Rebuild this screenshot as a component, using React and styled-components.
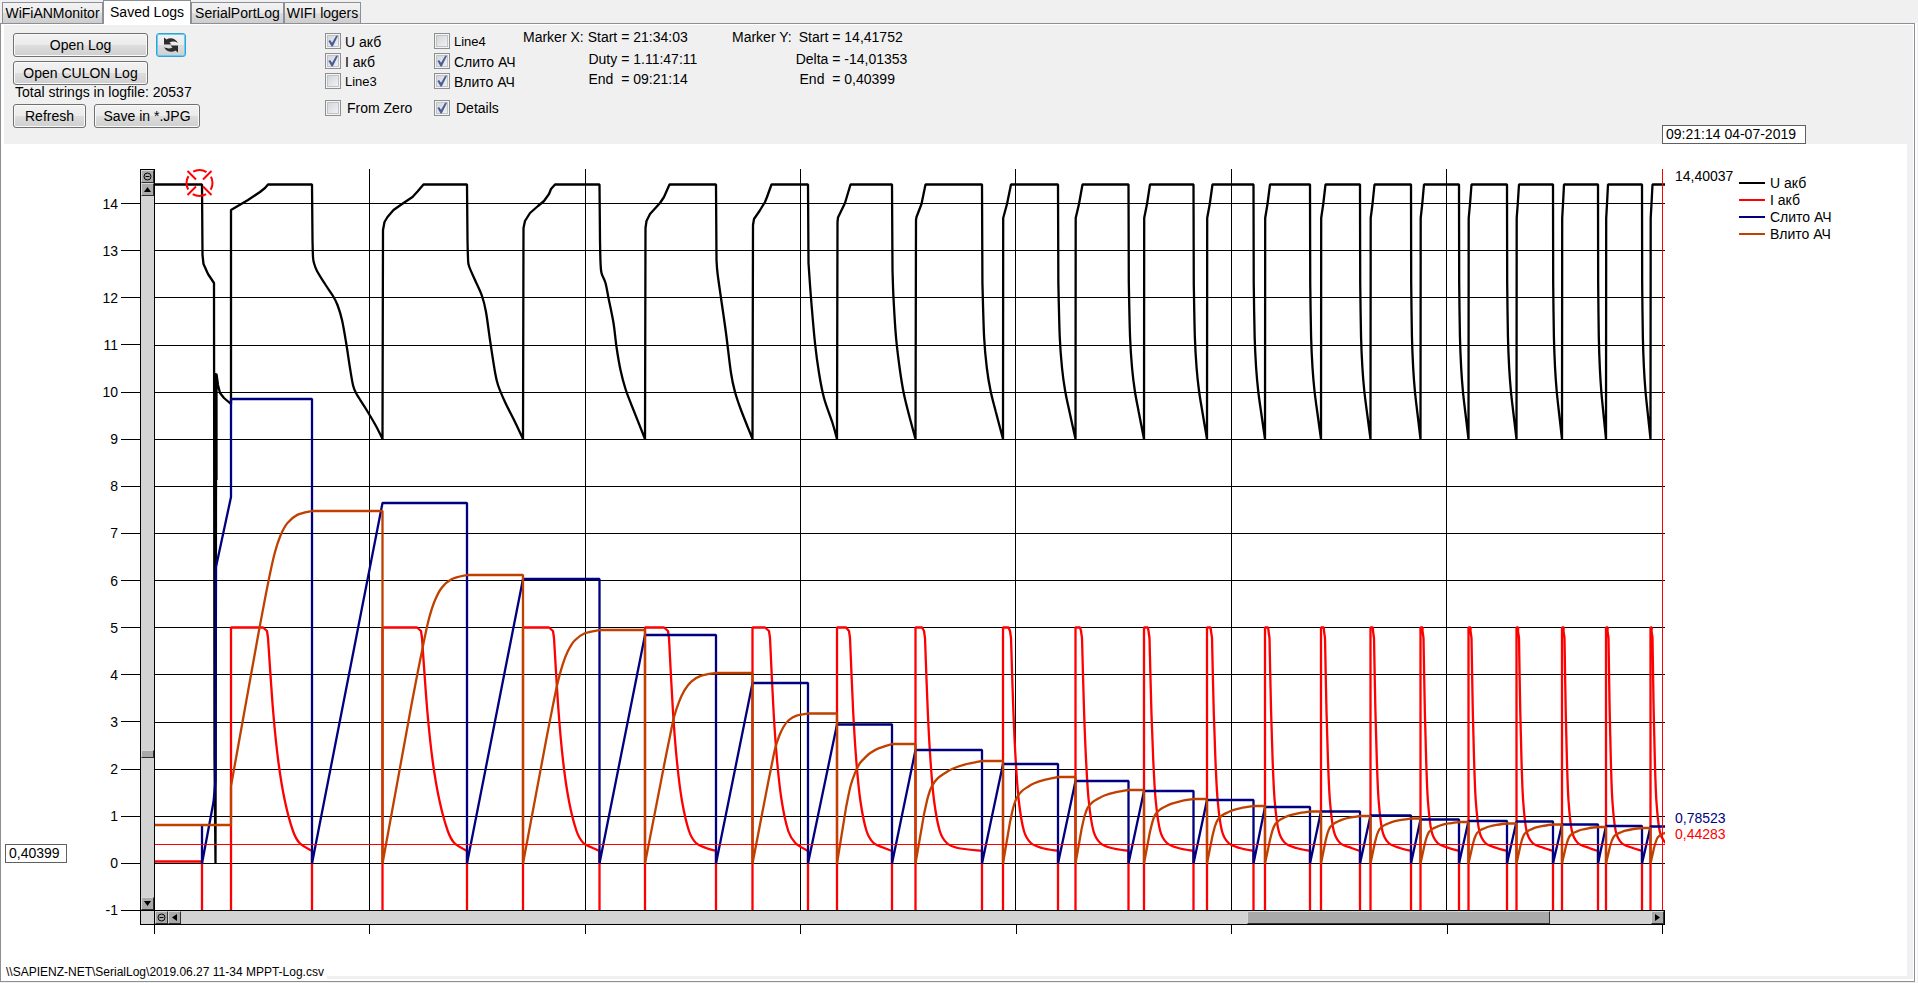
import React, { useState } from "react";
import styled, { createGlobalStyle } from "styled-components";

const GlobalStyle = createGlobalStyle`
  * {
    box-sizing: border-box;
  }
  body {
    margin: 0;
    background: #f0f0f0;
    color: #000;
    font: 14px/20px "Liberation Sans", Arial, sans-serif;
  }
  button, input {
    font: inherit;
    color: inherit;
  }
`;

const Window = styled.div`
  display: flex;
  flex-direction: column;
  min-height: 100vh;
  padding-right: 3px;
  padding-bottom: 1px;
`;

const Tabs = styled.nav`
  display: flex;
  align-items: flex-end;
  height: 23px;
  padding-left: 2px;
`;

const Tab = styled.button`
  width: ${(p) => p.$width}px;
  height: ${(p) => (p.$active ? 24 : 21)}px;
  margin-bottom: ${(p) => (p.$active ? -1 : 0)}px;
  padding: 0;
  border: 1px solid #8c8e98;
  border-bottom: 0;
  background: ${(p) =>
    p.$active ? "#fff" : "linear-gradient(#f3f3f3 0%, #ebebeb 50%, #dddddd 50%, #cdcdcd 100%)"};
  line-height: 19px;
  white-space: nowrap;
  z-index: ${(p) => (p.$active ? 1 : 0)};
`;

const Page = styled.main`
  flex: 1;
  display: flex;
  flex-direction: column;
  padding: 1px 1px 2px 3px;
  border: 1px solid #8c8e98;
  background: #fff;
  box-shadow: 2px 0 0 #fff;
`;

const Body = styled.div`
  flex: 1;
  display: flex;
  flex-direction: column;
  background: #f0f0f0;
`;

const Panel = styled.header`
  display: flex;
  height: 119px;
  padding: 8px 9px;
`;

const Actions = styled.div`
  display: flex;
  flex-direction: column;
  width: 312px;
`;

const ButtonRow = styled.div`
  display: flex;
  gap: 8px;
  margin-bottom: ${(p) => p.$after || 0}px;
`;

const Button = styled.button`
  width: ${(p) => p.$width}px;
  height: 24px;
  padding: 0;
  border: 1px solid ${(p) => (p.$focused ? "#3c9fd0" : "#707070")};
  border-radius: 3px;
  box-shadow: inset 0 0 0 1px ${(p) => (p.$focused ? "#5fd0f5" : "#fafafa")};
  background: linear-gradient(#f2f2f2 0%, #ebebeb 50%, #dddddd 50%, #cfcfcf 100%);
  line-height: 20px;
  white-space: nowrap;

  svg {
    display: block;
    margin: 0 auto;
  }
`;

const Total = styled.p`
  margin: -3px 0 2px 2px;
`;

const Checks = styled.div`
  display: grid;
  grid-template-columns: 109px 89px;
  grid-template-rows: 20px 20px 27px 20px;
  align-content: start;
`;

const Check = styled.label`
  display: flex;
  align-items: flex-start;
  gap: ${(p) => (p.$wide ? 6 : 4)}px;
  height: 16px;
  font-size: ${(p) => p.$size}px;
  line-height: ${(p) => (p.$wide ? 16 : 18)}px;
  white-space: nowrap;
`;

const Box = styled.input`
  appearance: none;
  width: 16px;
  height: 16px;
  margin: 0;
  padding: 1px;
  border: 1px solid #8e8f8f;
  box-shadow: inset 0 0 0 1px #f4f4f4, inset 0 0 0 2px #c0c4c9;
  background: linear-gradient(135deg, #cdd1d6, #f6f6f6);

  &:checked::after {
    content: "";
    display: block;
    width: 12px;
    height: 12px;
    background: #4a5f97;
    clip-path: polygon(12% 50%, 26% 42%, 42% 64%, 76% 6%, 92% 6%, 48% 96%, 38% 96%);
  }
`;

const Marker = styled.dl`
  display: grid;
  grid-template-columns: auto auto auto;
  grid-template-rows: 22px 20px 20px;
  align-content: start;
  width: ${(p) => p.$width}px;
  margin: -6px 0 0;
  justify-content: start;
  white-space: pre;
`;

const MarkerTitle = styled.dt`
  grid-row: 1 / 4;
  margin-right: 4px;
`;

const MarkerName = styled.dt`
  grid-column: 2;
  text-align: right;
`;

const MarkerValue = styled.dd`
  grid-column: 3;
  margin: 0;
`;

const Chart = styled.section`
  flex: 1;
  display: flex;
  flex-direction: column;
  margin-left: -3px;
  margin-right: 6px;
  padding-top: 25px;
  background: #fff;
`;

const PlotRow = styled.div`
  flex: 1;
  display: flex;
`;

const Gutter = styled.div`
  position: relative;
  width: 89px;
`;

const YAxis = styled.ol`
  display: flex;
  flex-direction: column;
  justify-content: space-between;
  width: 50px;
  margin: 0 0 -1px;
  padding: 34px 0 0;
  list-style: none;
`;

const YTick = styled.li`
  display: flex;
  align-items: center;
  justify-content: flex-end;
  gap: 3px;
  height: 1px;

  &::after {
    content: "";
    width: 19px;
    height: 1px;
    background: #000;
  }
`;

const VScroll = styled.div`
  display: flex;
  flex-direction: column;
  width: 15px;
  border: 1px solid #000;
  border-bottom: 0;
  background: #d3d3d3;
`;

const HScroll = styled.div`
  flex: 1;
  display: flex;
  height: 15px;
  border: 1px solid #000;
  border-left: 0;
  background: #d3d3d3;
`;

const ScrollButton = styled.button`
  display: grid;
  place-items: center;
  width: 13px;
  height: 13px;
  padding: 0;
  border: 1px solid;
  border-color: #d8d8d8 #303030 #303030 #d8d8d8;
  background: #a9a9a9;
`;

const Thumb = styled.div`
  flex: ${(p) => p.$size};
  border: 1px solid;
  border-color: #d8d8d8 #303030 #303030 #d8d8d8;
  background: #a9a9a9;
`;

const Track = styled.div`
  flex: ${(p) => p.$size};
`;

const Plot = styled.div`
  position: relative;
  flex: 1;
  min-width: 0;
`;

const PlotSvg = styled.svg`
  position: absolute;
  inset: 0;
  width: 100%;
  height: 100%;
`;

const Side = styled.aside`
  width: 242px;
  padding: 5px 0 0 74px;
`;

const LegendRow = styled.div`
  display: flex;
  align-items: center;
  gap: 5px;
  height: 17px;

  &::before {
    content: "";
    width: 26px;
    height: 2px;
    background: ${(p) => p.$color};
  }
`;

const CursorLabel = styled.output`
  position: absolute;
  padding: 0 3px;
  border: 1px solid #606060;
  background: #fff;
  line-height: 17px;
  white-space: nowrap;
`;

const DateLabel = styled(CursorLabel)`
  top: -44px;
  left: calc(100% - 3px);
  width: 144px;
`;

const LevelLabel = styled(CursorLabel)`
  left: 4px;
  bottom: 47px;
  width: 62px;
`;

const ValueLabel = styled.output`
  position: absolute;
  top: ${(p) => p.$top}%;
  left: calc(100% + 10px);
  color: ${(p) => p.$color};
  line-height: 14px;
`;

const ScrollRow = styled.div`
  display: flex;
  padding: 0 242px 0 139px;
`;

const Corner = styled.div`
  width: 15px;
  height: 15px;
  border: 1px solid #000;
  background: #d3d3d3;
`;

const XTicks = styled.div`
  display: flex;
  justify-content: space-between;
  height: 9px;
  margin: 0 244px 0 153px;

  i {
    width: 1px;
    background: #000;
  }
`;

const Footer = styled.footer`
  display: flex;
  align-items: flex-end;
  height: 45px;
  margin: 0 6px 0 -3px;
  padding-left: 5px;
  background: #fff;
  font-size: 12px;
  line-height: 14px;

  &::after {
    content: "";
    flex: 1;
    height: 3px;
    margin-left: 3px;
    margin-right: -6px;
    background: #f0f0f0;
  }
`;

const BLUE = "#000080";
const BROWN = "#c04000";

// plot area in drawing units: zero line at 863, one volt/amp = 47.13
const LEFT = 155;
const TOP = 169;
const WIDTH = 1510;
const HEIGHT = 741;
const ZERO = 863.5;
const FULL = 184.5;

// start, end of flat current, end of charge, discharged level, charged level,
// speed of the current decay, knee of the charge curve
const cycles = [
  { a: 231, k: 268, b: 312, out: 399, in: 511, s: 1.3, knee: 0.48 },
  { a: 382.5, k: 422, b: 467, out: 503, in: 575, s: 1.35, knee: 0.49 },
  { a: 523, k: 554, b: 599.5, out: 579, in: 630, s: 1.15, knee: 0.45 },
  { a: 645, k: 669, b: 716, out: 635, in: 673, s: 1, knee: 0.41 },
  { a: 752.5, k: 770, b: 808, out: 683, in: 713.5, s: 0.9, knee: 0.41 },
  { a: 837, k: 850, b: 892, out: 724.5, in: 744, s: 0.8, knee: 0.33 },
  { a: 915.5, k: 925, b: 982, out: 750, in: 761, s: 0.7, knee: 0.25 },
  { a: 1003, k: 1011, b: 1058, out: 764, in: 777, s: 0.6, knee: 0.25 },
  { a: 1075.5, k: 1082, b: 1128.5, out: 781, in: 790, s: 0.52, knee: 0.23 },
  { a: 1144, k: 1149.5, b: 1193.5, out: 791, in: 799, s: 0.48, knee: 0.23 },
  { a: 1207, k: 1212, b: 1253.5, out: 800, in: 806, s: 0.44, knee: 0.23 },
  { a: 1265, k: 1269.5, b: 1310, out: 807, in: 811.5, s: 0.4, knee: 0.23 },
  { a: 1321, k: 1325, b: 1360, out: 811.5, in: 816, s: 0.38, knee: 0.23 },
  { a: 1370.5, k: 1374, b: 1411, out: 815.5, in: 818.5, s: 0.36, knee: 0.22 },
  { a: 1420.5, k: 1423.5, b: 1459, out: 819.5, in: 822, s: 0.34, knee: 0.22 },
  { a: 1468.5, k: 1471.5, b: 1507, out: 821, in: 823.5, s: 0.33, knee: 0.22 },
  { a: 1516.5, k: 1519, b: 1553, out: 821.5, in: 824.5, s: 0.32, knee: 0.22 },
  { a: 1562, k: 1564.5, b: 1598, out: 824.5, in: 827, s: 0.31, knee: 0.22 },
  { a: 1606, k: 1608.5, b: 1642, out: 826, in: 828, s: 0.3, knee: 0.22 },
  { a: 1650.5, k: 1652.5, b: 1684, out: 826.5, in: 829, s: 0.3, knee: 0.22 },
];

// voltage while charging / discharging, x measured from the start of the part
const chargeShapes = [
  [[0, 210], [17, 200], [29, 192], [34, 188], [37, FULL]],
  [[0.5, 230], [2, 222], [5, 217], [11, 210], [21, 203], [30, 197], [35, 191.5], [41, FULL]],
  [[0.5, 228], [2, 221], [7, 213], [15, 206], [21, 201], [26, 194], [28, 189], [32, FULL]],
  [[0.5, 228], [1.5, 221], [5, 214], [15, 203], [19, 197], [24.5, FULL]],
  [[0.5, 225], [1.5, 219], [7, 211], [12.5, 202], [14.5, 197], [19, FULL]],
  [[0.5, 222], [1, 217.5], [8, 203], [13.5, FULL]],
  [[0.5, 220], [1, 217], [6, 204], [10, FULL]],
];

const dischargeShapes = [
  [[0.5, 240], [1, 257], [2, 263], [5, 271], [13, 284], [21, 296], [25.5, 305], [30, 320], [34, 342], [38, 368], [41, 385], [44, 393], [54, 409], [64, 426]],
  [[0.5, 240], [1, 258], [2, 266], [8, 280], [15, 296], [19, 312], [23, 340], [28, 372], [31, 385], [38, 402], [48, 422]],
  [[0.5, 240], [1, 262], [2, 273], [6, 283], [9, 298], [14, 323], [17, 347], [21, 370], [26, 389], [32, 405]],
  [[0.5, 260], [1.5, 273], [5, 298], [10, 333], [15, 373], [19, 392], [25, 410]],
  [[0.5, 263], [3, 298], [7, 343], [11, 373], [16, 398], [24.5, 423]],
  [[0.5, 270], [1.5, 298], [4, 337], [7.5, 367], [11.5, 392], [16.5, 413]],
];

// Catmull-Rom spline through the points, written as bezier segments
function smooth(points) {
  let d = "";
  for (let i = 0; i < points.length - 1; i++) {
    const p0 = points[i - 1] || points[i];
    const p1 = points[i];
    const p2 = points[i + 1];
    const p3 = points[i + 2] || p2;
    d += `C${p1[0] + (p2[0] - p0[0]) / 6} ${p1[1] + (p2[1] - p0[1]) / 6} `;
    d += `${p2[0] - (p3[0] - p1[0]) / 6} ${p2[1] - (p3[1] - p1[1]) / 6} ${p2[0]} ${p2[1]}`;
  }
  return d;
}

const line = (points) => points.map(([x, y]) => `L${x} ${y}`).join("");

function voltagePath() {
  let d = `M${LEFT} ${FULL}H202L202.5 255L203.5 264L208 274L214 283L214.5 757L215.5 863`;
  d += "L216 480L215.5 373L216.5 480V374L218 385L220 393L224 398L231 404";
  cycles.forEach((c, i) => {
    const next = cycles[i + 1];
    const w = i < 9 ? 8 - (i - 7) : Math.max(2, 6 - (i - 9) / 2);
    const up = chargeShapes[i] || [[0.2, 218], [w / 2, 204], [w, FULL]];
    d += line(up.map(([x, y]) => [c.a + x, y])) + `H${c.b}`;
    if (!next) return;
    const gap = next.a - c.b;
    const down = dischargeShapes[i]
      ? dischargeShapes[i].map(([x, y]) => [c.b + x, y])
      : [[0.02, 283], [0.1, 337], [0.23, 368], [0.41, 391], [0.66, 412]].map(([f, y]) => [c.b + f * gap, y]);
    d += line([down[0]]) + smooth([...down, [next.a, 439]]);
  });
  return d;
}

function currentPath() {
  let d = `M${LEFT} 861.5H202V920`;
  cycles.forEach(({ a, k, b, s }) => {
    const flat = k - Math.min(5, (k - a) * 0.3);
    const fall = [
      [k, 638],
      [k + 4 * s, 712],
      [k + 8 * s, 762],
      [k + 13 * s, 801],
      [k + 20 * s ** 0.85, 831],
      [k + 27 * s ** 0.6, 843],
      [k + 37 * s ** 0.35, 848],
    ].filter(([x]) => x < b - 4);
    d += `M${a} 920V627.5H${flat}L${k - 1} 631L${k} 638`;
    d += smooth([...fall, [b, 851]]) + "V920";
  });
  return d;
}

function drainPath() {
  let d = `M202 825V${ZERO}L213.5 802L215.5 780L216 567L231 497`;
  cycles.forEach((c, i) => {
    d += i ? `L${c.a} ${c.out}` : `V${c.out}`;
    d += `H${c.b}V${ZERO}`;
  });
  return d;
}

function chargePath() {
  let d = `M${LEFT} 825H231`;
  cycles.forEach((c, i) => {
    const base = i ? ZERO : 786;
    const w = c.b - c.a;
    const h = base - c.in;
    // [share of the knee, level] while the current is flat, then
    // [share of the rest, level] while it decays
    const rise = i < 5 ? [[0.7, 0.55], [0.86, 0.67]] : [[0.5, 0.47], [0.75, 0.65]];
    const settle = i < 5
      ? [[0, 0.77], [0.12, 0.85], [0.25, 0.91], [0.41, 0.955], [0.65, 0.986]]
      : [[0, 0.76], [0.12, 0.835], [0.25, 0.88], [0.41, 0.925], [0.65, 0.965]];
    const curve = [
      ...rise.map(([f, v]) => [c.a + f * c.knee * w, base - v * h]),
      ...settle.map(([f, v]) => [c.a + (c.knee + f * (1 - c.knee)) * w, base - v * h]),
      [c.b, c.in],
    ];
    d += `V${base}` + line([curve[0]]) + smooth(curve);
    if (cycles[i + 1]) d += `H${cycles[i + 1].a}`;
  });
  return d;
}

const traces = [
  { color: "#000", d: voltagePath() },
  { color: "#f00", d: currentPath() },
  { color: BLUE, d: drainPath() },
  { color: BROWN, d: chargePath() },
];

const yTicks = Array.from({ length: 16 }, (_, i) => 14 - i);
const gridX = [369, 585, 800, 1015, 1231, 1446];

function Traces() {
  return (
    <PlotSvg viewBox={`${LEFT} ${TOP} ${WIDTH} ${HEIGHT}`} preserveAspectRatio="none">
      <g stroke="#000" shapeRendering="crispEdges">
        {yTicks.slice(0, 15).map((v) => {
          const y = Math.round(863 - v * 47.13) + 0.5;
          return <line key={v} x1={LEFT} x2={LEFT + WIDTH} y1={y} y2={y} />;
        })}
        {gridX.map((x) => (
          <line key={x} x1={x + 0.5} x2={x + 0.5} y1={TOP} y2={TOP + HEIGHT} />
        ))}
      </g>
      <g fill="none" strokeWidth="2.3">
        {traces.map((t) => (
          <path key={t.color} d={t.d} stroke={t.color} strokeLinejoin="bevel" />
        ))}
      </g>
      <path d="M155 844.5H1665M1662.5 169V910" stroke="#f00" shapeRendering="crispEdges" />
      <g stroke="#f00" strokeWidth="2" fill="none">
        <circle cx="199.5" cy="183" r="13" strokeDasharray="14 6.42" strokeDashoffset="7" />
        <path d="M187.5 171l8.500 8.500M211.500 171l-8.500 8.500M187.500 195l8.500-8.500M211.500 195l-8.500-8.500" />
      </g>
    </PlotSvg>
  );
}

function Arrow({ d }) {
  return (
    <svg width="9" height="9" viewBox="0 0 9 9">
      <path d={d} />
    </svg>
  );
}

function ZoomOut() {
  return (
    <svg width="9" height="9" viewBox="0 0 9 9" fill="none" stroke="#000">
      <circle cx="4.5" cy="4.5" r="3.5" />
      <path d="M2.500 4.500H6.500" />
    </svg>
  );
}

function MarkerInfo({ title, rows, width }) {
  return (
    <Marker $width={width}>
      <MarkerTitle>{title}</MarkerTitle>
      {rows.map(([name, value]) => (
        <React.Fragment key={name}>
          <MarkerName>{name}</MarkerName>
          <MarkerValue>= {value}</MarkerValue>
        </React.Fragment>
      ))}
    </Marker>
  );
}

const tabs = [
  ["WiFiANMonitor", 101],
  ["Saved Logs", 88],
  ["SerialPortLog", 93],
  ["WIFI logers", 77],
];

const options = [
  ["U акб", true, 14],
  ["Line4", false, 13],
  ["I акб", true, 14],
  ["Слито АЧ", true, 14],
  ["Line3", false, 13],
  ["Влито АЧ", true, 14],
  ["From Zero", false, 14],
  ["Details", true, 14],
];

const legend = [
  ["U акб", "#000"],
  ["I акб", "#f00"],
  ["Слито АЧ", BLUE],
  ["Влито АЧ", BROWN],
];

function App() {
  const [active, setActive] = useState("Saved Logs");

  return (
    <Window>
      <GlobalStyle />
      <Tabs>
        {tabs.map(([name, width]) => (
          <Tab key={name} $width={width} $active={name === active} onClick={() => setActive(name)}>
            {name}
          </Tab>
        ))}
      </Tabs>
      <Page>
        <Body>
          <Panel>
            <Actions>
              <ButtonRow $after={4}>
                <Button $width={135}>Open Log</Button>
                <Button $width={30} $focused aria-label="Reload">
                  <svg width="16" height="16" viewBox="0 0 16 16" fill="#2c2c2c">
                    <path d="M1 0.500L3.500 2.500C7 0 12.500 1 15 6C12 4.200 9 4.200 6.500 5.500L8.500 7.500H1Z" />
                    <path d="M15 15.500L12.500 13.500C9 16 3.500 15 1 10C4 11.800 7 11.800 9.500 10.500L7.500 8.500H15Z" />
                  </svg>
                </Button>
              </ButtonRow>
              <ButtonRow>
                <Button $width={135}>Open CULON Log</Button>
              </ButtonRow>
              <Total>Total strings in logfile: 20537</Total>
              <ButtonRow>
                <Button $width={73}>Refresh</Button>
                <Button $width={106}>Save in *.JPG</Button>
              </ButtonRow>
            </Actions>
            <Checks>
              {options.map(([name, on, size], i) => (
                <Check key={name} $wide={i > 5} $size={size}>
                  <Box type="checkbox" defaultChecked={on} />
                  {name}
                </Check>
              ))}
            </Checks>
            <MarkerInfo
              title="Marker X:"
              width={209}
              rows={[["Start ", "21:34:03"], ["Duty ", "1.11:47:11"], ["End  ", "09:21:14"]]}
            />
            <MarkerInfo
              title="Marker Y:"
              width={209}
              rows={[["Start ", "14,41752"], ["Delta ", "-14,01353"], ["End  ", "0,40399"]]}
            />
          </Panel>
          <Chart>
            <PlotRow>
              <Gutter>
                <LevelLabel>0,40399</LevelLabel>
              </Gutter>
              <YAxis>
                {yTicks.map((v) => (
                  <YTick key={v}>{v}</YTick>
                ))}
              </YAxis>
              <VScroll>
                <ScrollButton aria-label="Zoom out Y"><ZoomOut /></ScrollButton>
                <ScrollButton aria-label="Up"><Arrow d="M4.500 2L8 7H1Z" /></ScrollButton>
                <Track $size={556} />
                <Thumb $size={6} />
                <Track $size={139} />
                <ScrollButton aria-label="Down"><Arrow d="M4.500 7L8 2H1Z" /></ScrollButton>
              </VScroll>
              <Plot>
                <Traces />
                <DateLabel>09:21:14 04-07-2019</DateLabel>
                <ValueLabel $top={0} $color="#000">14,40037</ValueLabel>
                <ValueLabel $top={86.6} $color={BLUE}>0,78523</ValueLabel>
                <ValueLabel $top={88.8} $color="#f00">0,44283</ValueLabel>
              </Plot>
              <Side>
                {legend.map(([name, color]) => (
                  <LegendRow key={name} $color={color}>{name}</LegendRow>
                ))}
              </Side>
            </PlotRow>
            <ScrollRow>
              <Corner />
              <HScroll>
                <ScrollButton aria-label="Zoom out X"><ZoomOut /></ScrollButton>
                <ScrollButton aria-label="Left"><Arrow d="M2 4.500L7 1V8Z" /></ScrollButton>
                <Track $size={1067} />
                <Thumb $size={302} />
                <Track $size={101} />
                <ScrollButton aria-label="Right"><Arrow d="M7 4.500L2 1V8Z" /></ScrollButton>
              </HScroll>
            </ScrollRow>
            <XTicks>
              {[0, 1, 2, 3, 4, 5, 6, 7].map((n) => (
                <i key={n} />
              ))}
            </XTicks>
          </Chart>
          <Footer>\\SAPIENZ-NET\SerialLog\2019.06.27 11-34 MPPT-Log.csv</Footer>
        </Body>
      </Page>
    </Window>
  );
}

export default App;
